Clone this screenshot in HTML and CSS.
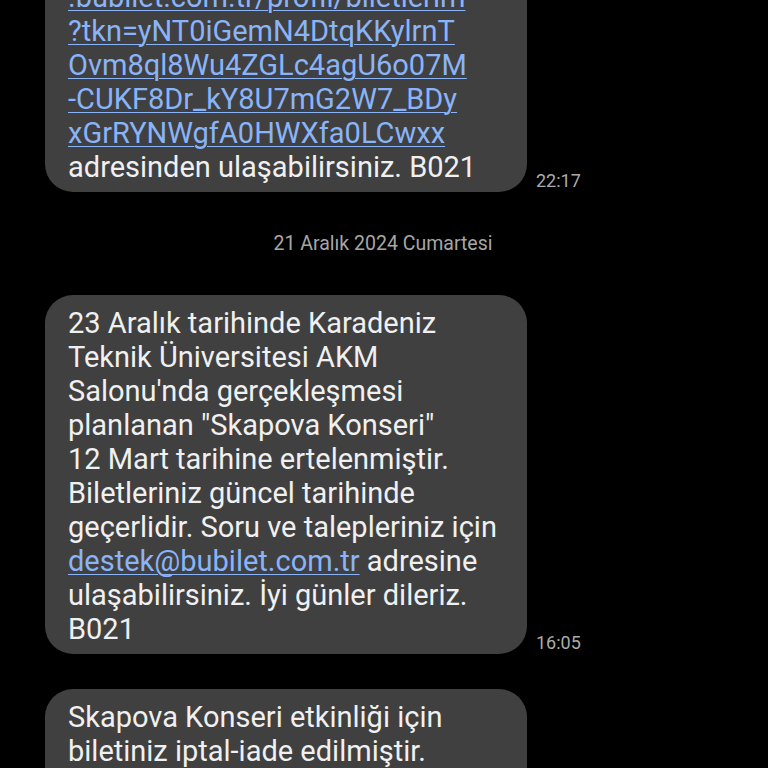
FILE: index.html
```html
<!DOCTYPE html>
<html lang="tr">
<head>
<meta charset="utf-8">
<link rel="stylesheet" href="styles.css">
</head>
<body>
<div class="thread">
  <div class="row">
    <div class="bubble">Biletlerinize https://www<br><a class="link" href="#">.bubilet.com.tr/profil/biletlerim<br>?tkn=yNT0iGemN4DtqKKylrnT<br>Ovm8ql8Wu4ZGLc4agU6o07M<br>-CUKF8Dr_kY8U7mG2W7_BDy<br>xGrRYNWgfA0HWXfa0LCwxx</a><br>adresinden ulaşabilirsiniz. B021</div>
    <div class="time">22:17</div>
  </div>
  <div class="date">21 Aralık 2024 Cumartesi</div>
  <div class="row">
    <div class="bubble">23 Aralık tarihinde Karadeniz<br>Teknik Üniversitesi AKM<br>Salonu'nda gerçekleşmesi<br>planlanan "Skapova Konseri"<br>12 Mart tarihine ertelenmiştir.<br>Biletleriniz güncel tarihinde<br>geçerlidir. Soru ve talepleriniz için<br><a class="link" href="#">destek@bubilet.com.tr</a> adresine<br>ulaşabilirsiniz. İyi günler dileriz.<br>B021</div>
    <div class="time">16:05</div>
  </div>
  <div class="row row-next">
    <div class="bubble">Skapova Konseri etkinliği için<br>biletiniz iptal-iade edilmiştir.<br>Ücret iadeniz kartınıza yapılacaktır.<br>B021</div>
    <div class="time">16:10</div>
  </div>
</div>
</body>
</html>
```
FILE: styles.css
```css
html, body {
  margin: 0;
  padding: 0;
  background: #000;
  overflow: hidden;
  height: 768px;
}
.thread {
  margin-top: -65px;
  padding-left: 45px;
  font-family: Roboto, "Noto Sans", sans-serif;
}
.row {
  display: flex;
  align-items: flex-end;
}
.bubble {
  width: 482px;
  box-sizing: border-box;
  background: #404040;
  color: #f0f0f0;
  border-radius: 28px;
  padding: 11px 10px 8px 23px;
  font-size: 29px;
  line-height: 34px;
  white-space: nowrap;
}
.link {
  color: #8ab4f8;
  text-decoration: underline;
  text-decoration-thickness: 1px;
  text-underline-offset: 3px;
}
.time {
  margin-left: 9px;
  margin-bottom: 1px;
  color: #ababab;
  font-size: 18px;
  line-height: 20px;
}
.date {
  margin: 42px 0 41px;
  height: 20px;
  line-height: 20px;
  font-size: 19.5px;
  color: #a6a6a6;
  width: 676px;
  text-align: center;
}
.row-next {
  margin-top: 35px;
}
```
